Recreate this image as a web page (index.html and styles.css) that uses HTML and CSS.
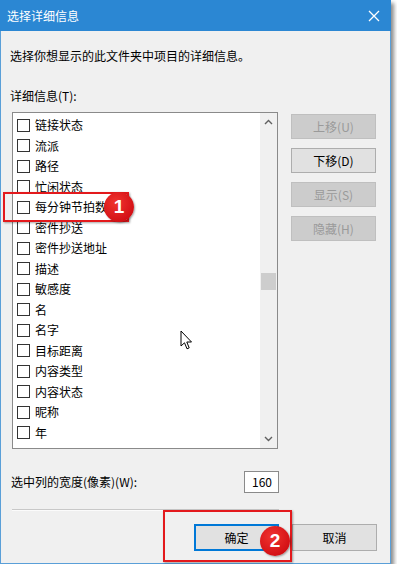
FILE: index.html
```html
<!DOCTYPE html>
<html lang="zh">
<head>
<meta charset="utf-8">
<title>选择详细信息</title>
<link rel="stylesheet" href="styles.css">
</head>
<body>
<div class="window">
  <div class="titlebar">
    <span class="title">选择详细信息</span>
    <svg class="close" width="12" height="12" viewBox="0 0 12 12"><path d="M1 1 L11 11 M11 1 L1 11" stroke="#fff" stroke-width="1.3" fill="none"/></svg>
  </div>
  <div class="content">
    <p class="desc">选择你想显示的此文件夹中项目的详细信息。</p>
    <p class="label">详细信息(T):</p>
    <div class="main">
      <div class="listbox">
        <ul class="items">
          <li><span class="cb"></span>链接状态</li>
          <li><span class="cb"></span>流派</li>
          <li><span class="cb"></span>路径</li>
          <li><span class="cb"></span>忙闲状态</li>
          <li><span class="cb"></span>每分钟节拍数</li>
          <li><span class="cb"></span>密件抄送</li>
          <li><span class="cb"></span>密件抄送地址</li>
          <li><span class="cb"></span>描述</li>
          <li><span class="cb"></span>敏感度</li>
          <li><span class="cb"></span>名</li>
          <li><span class="cb"></span>名字</li>
          <li><span class="cb"></span>目标距离</li>
          <li><span class="cb"></span>内容类型</li>
          <li><span class="cb"></span>内容状态</li>
          <li><span class="cb"></span>昵称</li>
          <li><span class="cb"></span>年</li>
        </ul>
        <div class="scrollbar">
          <svg class="arrow" width="9" height="6" viewBox="0 0 9 6"><path d="M1 5 L4.5 1.5 L8 5" stroke="#606060" stroke-width="1.4" fill="none"/></svg>
          <div class="track"><div class="thumb"></div></div>
          <svg class="arrow" width="9" height="6" viewBox="0 0 9 6"><path d="M1 1 L4.5 4.5 L8 1" stroke="#606060" stroke-width="1.4" fill="none"/></svg>
        </div>
      </div>
      <div class="side">
        <button class="btn disabled">上移(U)</button>
        <button class="btn">下移(D)</button>
        <button class="btn disabled">显示(S)</button>
        <button class="btn disabled">隐藏(H)</button>
      </div>
    </div>
    <div class="widthrow">
      <span class="wlabel">选中列的宽度(像素)(W):</span>
      <span class="winput">160</span>
    </div>
    <div class="sep"></div>
    <div class="footer">
      <button class="btn default">确定</button>
      <button class="btn">取消</button>
    </div>
  </div>

  <div class="mark mark1"></div>
  <div class="badge badge1">1</div>
  <div class="mark mark2"></div>
  <div class="badge badge2">2</div>
  <svg class="cursor" width="13" height="21" viewBox="0 0 13 21"><path d="M1 1 L1 16 L4.5 12.8 L7 18.8 L9.2 17.9 L6.8 12 L11.5 12 Z" fill="#fff" stroke="#000" stroke-width="1" stroke-linejoin="round"/></svg>
</div>
</body>
</html>
```

FILE: styles.css
```css
* { box-sizing: border-box; }
html, body { margin: 0; padding: 0; background: #ffffff; }
body {
  font-family: "Noto Sans CJK SC", "Noto Sans", sans-serif;
  font-size: 12px;
  color: #000;
}
.window {
  position: relative;
  width: 391px;
  height: 564px;
  background: #f0f0f0;
  border: 1px solid #5a9fd8;
  border-top: none;
  box-shadow: 3px 3px 4px rgba(0,0,0,0.45);
}
.titlebar {
  height: 31px;
  background: #2b87d3;
  color: #fff;
  display: flex;
  align-items: center;
  justify-content: space-between;
  padding: 0 11px 0 7px;
  margin: 0 -1px;
}
.title { font-size: 12px; line-height: 16px; }
.close { display: block; }
.content {
  padding: 0 13px 0 9px;
}
.desc {
  margin: 17px 0 0 0;
  line-height: 16px;
}
.label {
  margin: 24px 0 0 0;
  line-height: 16px;
}
.main {
  margin-top: 8px;
  display: flex;
  align-items: flex-start;
}
.listbox {
  margin-left: 2px;
  width: 266px;
  height: 337px;
  border: 1px solid #8a8a8a;
  background: #fff;
  display: flex;
}
.items {
  list-style: none;
  margin: 0;
  padding: 2px 0 0 4px;
  flex: 1;
}
.items li {
  height: 20.5px;
  display: flex;
  align-items: center;
  line-height: 16px;
  white-space: nowrap;
}
.cb {
  width: 13px;
  height: 13px;
  border: 1px solid #333;
  background: #fff;
  margin-right: 5px;
  flex: none;
}
.scrollbar {
  width: 17px;
  background: #f0f0f0;
  display: flex;
  flex-direction: column;
  align-items: center;
  padding: 6px 0 6px 0;
}
.arrow { display: block; flex: none; }
.track {
  flex: 1;
  width: 100%;
  position: relative;
  padding-top: 148px;
}
.thumb {
  margin: 0 auto;
  width: 15px;
  height: 17px;
  background: #cdcdcd;
}
.side {
  margin-left: 13px;
  margin-top: 2px;
  display: flex;
  flex-direction: column;
  gap: 9px;
}
.btn {
  width: 85px;
  height: 25px;
  padding: 0;
  font-family: "Noto Sans CJK SC", "Noto Sans", sans-serif;
  font-size: 12px;
  color: #000;
  background: #e1e1e1;
  border: 1px solid #adadad;
  line-height: 16px;
}
.btn.disabled {
  background: #cccccc;
  border-color: #bfbfbf;
  color: #9a9a9a;
}
.btn.default {
  border: 2px solid #0078d7;
}
.widthrow {
  margin-top: 22px;
  display: flex;
  align-items: center;
  justify-content: space-between;
  height: 22px;
  padding-right: 98px;
}
.wlabel { padding-left: 1px; line-height: 16px; }
.winput {
  width: 35px;
  height: 22px;
  background: #fff;
  border: 1px solid #8a8a8a;
  text-align: right;
  padding-right: 6px;
  line-height: 19px;
}
.sep {
  margin: 16px 98px 0 2px;
  border-top: 1px solid #c8c8c8;
  border-bottom: 1px solid #fbfbfb;
}
.footer {
  margin-top: 13px;
  display: flex;
  justify-content: flex-end;
  gap: 13px;
}
.footer .btn { height: 27px; }

.mark {
  position: absolute;
  border: 2px solid #e3191c;
  box-shadow: 1px 1px 2px rgba(0,0,0,0.35);
}
.mark1 { left: 2px; top: 192px; width: 126px; height: 30px; }
.mark2 { left: 162px; top: 510px; width: 129px; height: 52px; }
.badge {
  position: absolute;
  width: 30px;
  height: 30px;
  border-radius: 50%;
  background: radial-gradient(circle at 40% 35%, #f0342f 0%, #d41116 70%, #b80b10 100%);
  color: #fff;
  font-family: "Liberation Sans", Arial, sans-serif;
  font-weight: bold;
  font-size: 19px;
  line-height: 30px;
  text-align: center;
  box-shadow: 1px 1px 2px rgba(0,0,0,0.35);
}
.badge1 { left: 103px; top: 192px; }
.badge2 { left: 259px; top: 526px; }
.cursor {
  position: absolute;
  left: 179px;
  top: 330px;
}
```
